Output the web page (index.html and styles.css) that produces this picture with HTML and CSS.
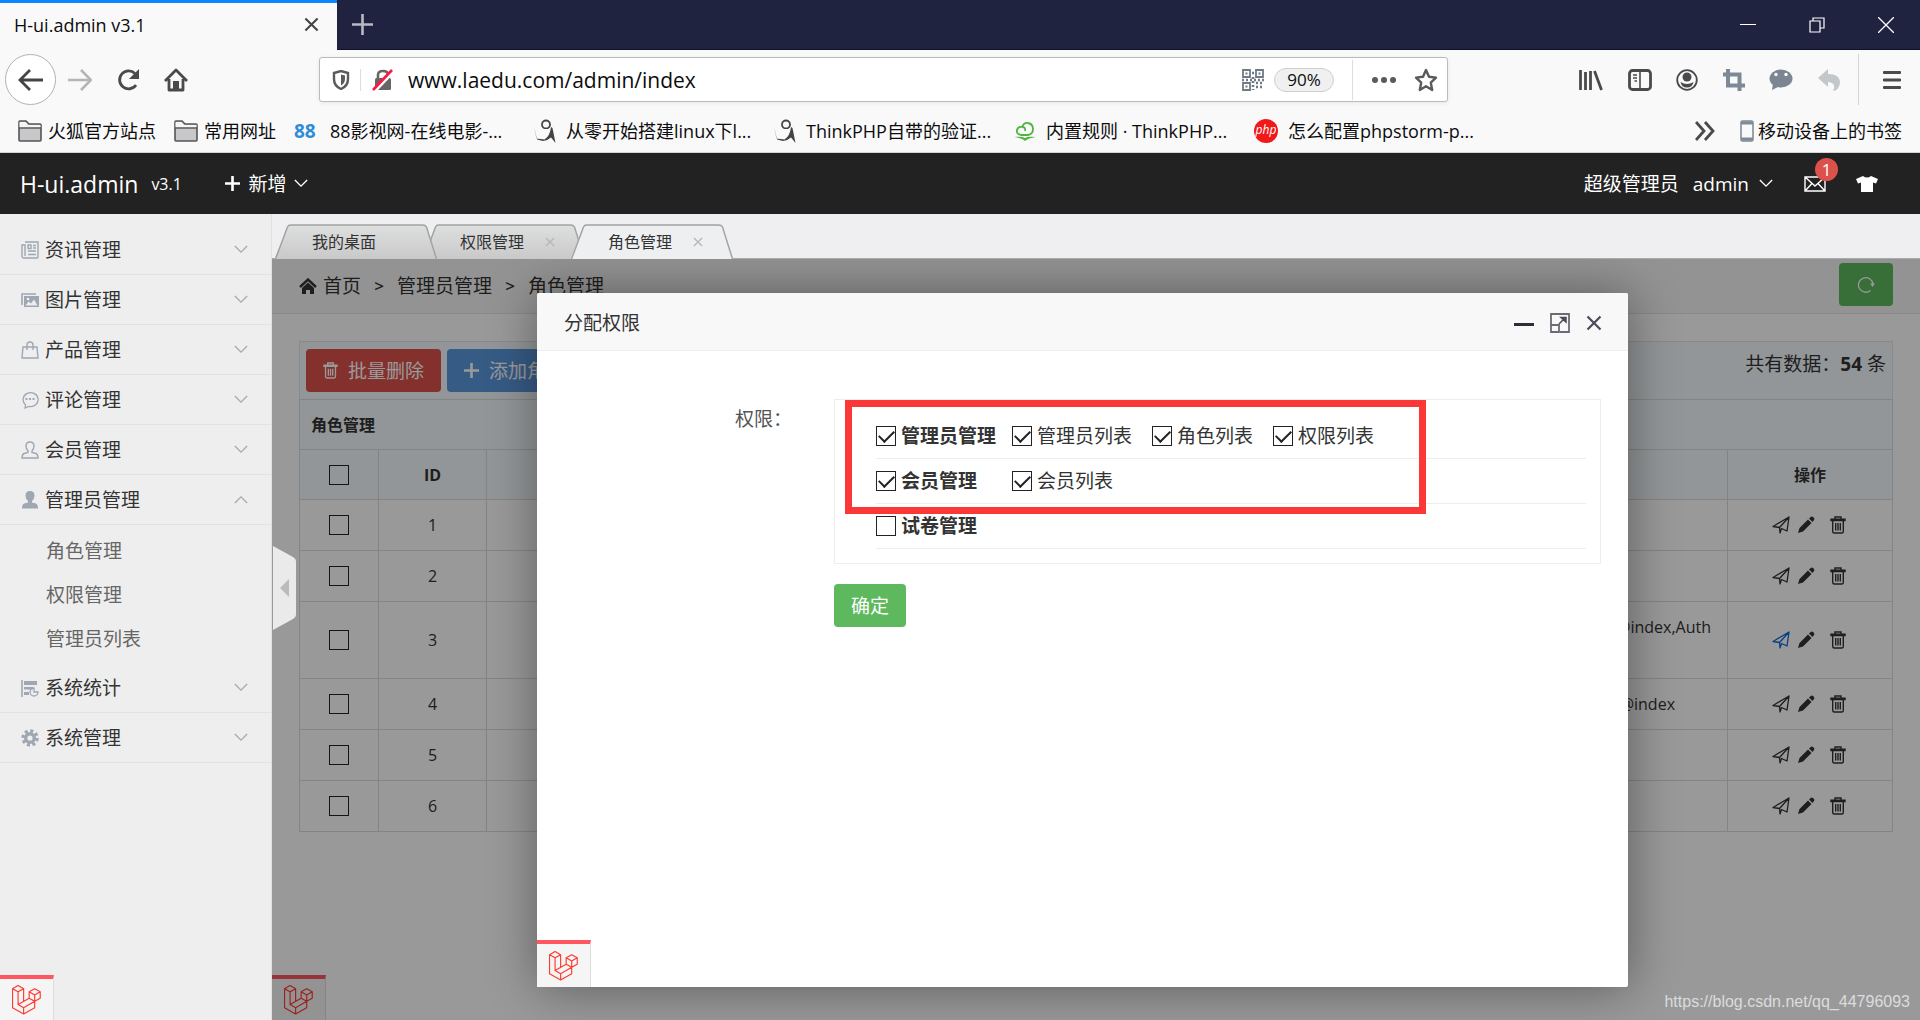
FILE: index.html
```html
<!DOCTYPE html>
<html lang="zh-CN">
<head>
<meta charset="utf-8">
<title>H-ui.admin v3.1</title>
<link rel="stylesheet" href="styles.css">
</head>
<body>
<svg class="sprite" aria-hidden="true">
  <symbol id="i-down" viewBox="0 0 16 10"><path d="M1 1l7 7 7-7" fill="none" stroke="currentColor" stroke-width="1.6"/></symbol>
  <symbol id="i-folder" viewBox="0 0 24 22"><path d="M1 20V2q0-1 1-1h6l3 3h11q1 0 1 1v15q0 1-1 1H2q-1 0-1-1z" fill="#c8c8ca" stroke="#555" stroke-width="1.6"/><path d="M1.5 7.5h21V5H10L7.500 2h-6z" fill="#f5f5f5"/><path d="M1 8h22" stroke="#555" stroke-width="1.4"/></symbol>
  <symbol id="i-figure" viewBox="0 0 22 24"><circle cx="12" cy="5.500" r="4" fill="none" stroke="#444" stroke-width="1.8"/><path d="M0 7l2.500 12.500 8 1Q16 17 17 8l1.500 1 3 15-4.500-5.500Q13 22 9 22l-6-1.500z" fill="#444"/><path d="M3.500 10l1.500 8h4q5-2 6-8z" fill="#f9f9fa"/></symbol>
  <symbol id="i-plane" viewBox="0 0 18 18"><path d="M1 10.500L17 1l-2 14-5.500-2.500L8 17l-.5-5.500L17 1 7.500 11.500z" fill="none" stroke="currentColor" stroke-width="1.3" stroke-linejoin="round"/></symbol>
  <symbol id="i-pen" viewBox="0 0 18 18"><path d="M1 17l1.500-5L11 3.500 14.500 7 6 15.500zM12 2.500L14 .7q1-.6 2 .3l1 1q.8 1 0 2L15.500 6z" fill="currentColor"/></symbol>
  <symbol id="i-trash" viewBox="0 0 16 18"><path d="M1 4.500V3.200h14v1.300zM5 3V1h6v2M2.700 5v10.500q0 1.500 1.500 1.500h7.600q1.500 0 1.500-1.500V5M5.700 7v7.500M8 7v7.500M10.300 7v7.500" fill="none" stroke="currentColor" stroke-width="1.4"/></symbol>
  <symbol id="i-laravel" viewBox="0 0 50 52"><path d="M.8 6.300L10.400.8 20 6.300l-9.600 5.500zM.8 6.300v33l19.200 11 19.200-11v-11M10.400 11.800v22l9.600 5.500 19.200-11M20 6.300v22M10.400 33.800l19.200-11M29.600 11.800l9.600-5.500 9.600 5.500-9.600 5.500zM29.600 11.800v11l9.600 5.500 9.600-5.500v-11M39.200 17.300v11M20 39.300v11" fill="none" stroke="#ff3a2e" stroke-width="2" stroke-linejoin="round"/></symbol>
  <symbol id="i-x" viewBox="0 0 16 16"><path d="M1.500 1.500l13 13m0-13l-13 13" fill="none" stroke="currentColor" stroke-width="2.200"/></symbol>
  <symbol id="i-plus" viewBox="0 0 16 16"><path d="M8 0v16M0 8h16" fill="none" stroke="currentColor" stroke-width="2.800"/></symbol>
  <symbol id="i-tab" viewBox="0 0 162 35"><path d="M0 35L13 3q1-2 3-2h132q3 0 4 2l10 32z" fill="url(#tabfill)"/><path d="M1 35L13 3q1-2 3-2h132q3 0 4 2l10 32" fill="none" stroke="#a3a3a3" stroke-width="1.500"/></symbol>
  <symbol id="i-tab-on" viewBox="0 0 162 35"><path d="M0 35L13 3q1-2 3-2h132q3 0 4 2l10 32z" fill="#eeeff0"/><path d="M1 35L13 3q1-2 3-2h132q3 0 4 2l10 32" fill="none" stroke="#a3a3a3" stroke-width="1.500"/></symbol>
  <defs><linearGradient id="tabfill" x1="0" y1="0" x2="0" y2="1"><stop offset="0" stop-color="#dedfdf"/><stop offset="1" stop-color="#c9c9ca"/></linearGradient></defs>
</svg>

<div class="titlebar">
  <div class="browser-tab"><span>H-ui.admin v3.1</span><button aria-label="关闭标签页"><svg width="15" height="15"><use href="#i-x"/></svg></button></div>
  <button class="new-tab" aria-label="新标签页"><svg width="21" height="21" viewBox="0 0 21 21"><path d="M10.500 0v21M0 10.500h21" stroke="#b9b9c4" stroke-width="2.600"/></svg></button>
  <div class="window-buttons">
    <button aria-label="最小化"><svg width="16" height="16"><path d="M0 7.500h16" stroke="#fff"/></svg></button>
    <button aria-label="还原"><svg width="16" height="16" fill="none" stroke="#fff" stroke-width="1.200"><path d="M1 4h10v11H1zM4 4V1h11v10h-4"/></svg></button>
    <button aria-label="关闭"><svg width="16" height="16"><path d="M0 0l16 16M16 0L0 16" stroke="#fff" stroke-width="1.300"/></svg></button>
  </div>
</div>

<div class="toolbar">
  <div class="nav-buttons">
    <button class="back" aria-label="后退"><svg width="26" height="22" viewBox="0 0 26 22"><path d="M25 11H2M12 1L2 11l10 10" fill="none" stroke="#444" stroke-width="2.800"/></svg></button>
    <button aria-label="前进"><svg width="24" height="22" viewBox="0 0 24 22"><path d="M0 11h22M13 1l10 10-10 10" fill="none" stroke="#b5b5b5" stroke-width="2.600"/></svg></button>
    <button aria-label="刷新"><svg width="24" height="24" viewBox="0 0 24 24"><path d="M19 5.500A9 9 0 1 0 20 17" fill="none" stroke="#4a4a4c" stroke-width="2.800"/><path d="M23 1v10H13z" fill="#4a4a4c"/></svg></button>
    <button aria-label="主页"><svg width="24" height="24" viewBox="0 0 24 24"><path d="M1 13L12 2l11 11M5 11v11h14V11" fill="none" stroke="#4a4a4c" stroke-width="2.800" stroke-linejoin="round"/><path d="M9 22v-9h6v9z" fill="#4a4a4c"/></svg></button>
  </div>
  <div class="urlbar">
    <svg class="shield" width="18" height="20" viewBox="0 0 18 20"><path d="M2 3l7-2 7 2v6q0 7-7 10-7-3-7-10z" fill="none" stroke="#5a5a5c" stroke-width="2.400"/><path d="M9 4.500v11q4-2 4-7v-3z" fill="#5a5a5c"/></svg>
    <svg class="lock" width="22" height="22" viewBox="0 0 22 22"><path d="M6 10V6q0-4 5-4t5 4v4" fill="none" stroke="#666" stroke-width="2.600"/><rect x="3" y="9" width="16" height="12" rx="1.500" fill="#666"/><path d="M3 22L22 2" stroke="#fff" stroke-width="3"/><path d="M1 21L20 1" stroke="#ff1744" stroke-width="2.600"/></svg>
    <input type="text" aria-label="地址" value="www.laedu.com/admin/index">
    <svg width="22" height="22" viewBox="0 0 22 22" fill="none" stroke="#6f7a86" stroke-width="1.800"><path d="M1 1h7v7H1zM14 1h7v7h-7zM1 14h7v7H1z"/><path d="M3.500 4.500h2M16.500 4.500h2M3.500 17.500h2" stroke-width="2"/><path d="M10 4h3M0 11h22M11 8v13M14 14h8M14 18h8" stroke-dasharray="2 2" stroke-width="2.600"/></svg>
    <button class="zoom-level">90%</button>
    <svg class="dots" width="26" height="8"><g fill="#5a5a5c"><circle cx="4" cy="4" r="3"/><circle cx="13" cy="4" r="3"/><circle cx="22" cy="4" r="3"/></g></svg>
    <svg width="24" height="24" viewBox="0 0 24 24"><path d="M12 2l3 6.800 7 .8-5.200 5 1.400 7.400-6.200-3.700L5.800 22l1.400-7.400L2 9.600l7-.8z" fill="none" stroke="#5a5a5c" stroke-width="2.400" stroke-linejoin="round"/></svg>
  </div>
  <div class="tools">
    <svg width="24" height="22" viewBox="0 0 24 22"><path d="M1.500 1v20M6.500 3v18M11.500 2v19M15.500 2l7 19" stroke="#4a4a4c" stroke-width="2.800"/></svg>
    <svg width="24" height="22" viewBox="0 0 24 22"><rect x="1.500" y="1.500" width="21" height="19" rx="3" fill="none" stroke="#4a4a4c" stroke-width="2.800"/><path d="M12 2v18" stroke="#4a4a4c" stroke-width="1.600"/><path d="M5 6h4M5 9h4M6.500 12H9" stroke="#4a4a4c" stroke-width="1.500"/></svg>
    <svg width="22" height="22" viewBox="0 0 22 22"><circle cx="11" cy="11" r="9.800" fill="none" stroke="#4a4a4c" stroke-width="1.800"/><circle cx="11" cy="8" r="4.500" fill="#4a4a4c"/><path d="M4.500 13q6.500 4 13 0-1 5.500-6.500 5.500T4.500 13z" fill="#4a4a4c"/></svg>
    <svg width="22" height="22" viewBox="0 0 22 22"><path d="M5 0v16.500h17M0 5.500h16.500V22" fill="none" stroke="#7e8996" stroke-width="4"/></svg>
    <svg width="24" height="22" viewBox="0 0 24 22"><ellipse cx="12" cy="9.500" rx="11.500" ry="9" fill="#7b8692"/><path d="M4 14l-1 7 8-4z" fill="#7b8692"/><circle cx="7" cy="5.500" r="1.700" fill="#fff"/><circle cx="17" cy="5.500" r="1.700" fill="#fff"/></svg>
    <svg width="22" height="22" viewBox="0 0 22 22"><path d="M0 9L10 0v5q12 0 12 9-1 7-7 8 4-8-5-9v5z" fill="#c3c7cc"/></svg>
  </div>
  <button class="menu" aria-label="菜单"><svg width="18" height="20" viewBox="0 0 18 20"><path d="M1 2.500h16M1 10h16M1 17.500h16" stroke="#4a4a4c" stroke-width="2.800" stroke-linecap="round"/></svg></button>
</div>

<nav class="bookmarks">
  <a href="#"><svg width="24" height="22"><use href="#i-folder"/></svg>火狐官方站点</a>
  <a href="#"><svg width="24" height="22"><use href="#i-folder"/></svg>常用网址</a>
  <a class="site" href="#"><b class="b88">88</b>88影视网-在线电影-...</a>
  <a class="site" href="#"><svg width="22" height="24"><use href="#i-figure"/></svg>从零开始搭建linux下l...</a>
  <a class="site" href="#"><svg width="22" height="24"><use href="#i-figure"/></svg>ThinkPHP自带的验证...</a>
  <a class="site" href="#"><svg width="22" height="20" viewBox="0 0 22 20"><path d="M7 14q-5-1-4-5 1-4 5-3Q10 1 14 2q5 1 5 6t-5 6H7M8 6q4 0 3 4" fill="none" stroke="#4fb53f" stroke-width="1.800"/><path d="M0 16q8-1 11 1 3-2 11-1-8 1-11 4-3-3-11-4z" fill="#4fb53f"/></svg>内置规则 · ThinkPHP...</a>
  <a class="site" href="#"><i class="php">php</i>怎么配置phpstorm-p...</a>
  <button class="more" aria-label="更多书签"><svg width="20" height="20" viewBox="0 0 20 20"><path d="M1 1l8 9-8 9M10 1l8 9-8 9" fill="none" stroke="#4a4a4c" stroke-width="2.800"/></svg></button>
  <a class="mobile" href="#"><svg width="14" height="22" viewBox="0 0 14 22"><rect x="1" y="1" width="12" height="20" rx="2" fill="#f9f9fa" stroke="#9aa3ac" stroke-width="2"/><path d="M1 1.500h12v3H1zM1 17.500h12v3H1z" fill="#7e8a96"/></svg>移动设备上的书签</a>
</nav>

<header class="site-header">
  <a class="brand" href="#">H-ui.admin</a><span class="version">v3.1</span>
  <button class="add-new"><svg width="15" height="15"><use href="#i-plus"/></svg>新增<svg class="caret" width="14" height="9"><use href="#i-down"/></svg></button>
  <div class="user">
    <span>超级管理员</span>
    <button>admin<svg class="caret" width="14" height="9"><use href="#i-down"/></svg></button>
    <a class="mail" href="#" aria-label="消息"><svg width="22" height="16" viewBox="0 0 22 16"><path d="M1 1h20v14H1zM1 1l10 9L21 1M1 15l7-7.500M21 15l-7-7.500" fill="none" stroke="#fff" stroke-width="1.400"/></svg><span class="badge">1</span></a>
    <a class="skin" href="#" aria-label="换肤"><svg width="22" height="16" viewBox="0 0 22 16"><path d="M7 0q4 3 8 0l7 3-2 4.500-3-1V16H5V6.500l-3 1L0 3z" fill="#fff"/></svg></a>
  </div>
</header>

<div class="layout">
  <aside class="sidebar">
    <nav class="side-menu">
      <a class="entry" href="#"><svg width="18" height="18" viewBox="0 0 18 18"><path d="M4 1h13v15q0 1-1 1H3q-2 0-2-2V4h3v11M7 4h3v3.500H7zM12 4.500h3M12 7h3M7 10h8M7 13.500h8" fill="none" stroke="#9fa7b3" stroke-width="1.400"/></svg>资讯管理<svg class="caret" width="14" height="9"><use href="#i-down"/></svg></a>
      <a class="entry" href="#"><svg width="18" height="18" viewBox="0 0 18 18"><path d="M1 14V3h14" fill="none" stroke="#9fa7b3" stroke-width="1.600"/><rect x="3" y="5" width="15" height="11" fill="#9fa7b3"/><path d="M4.500 14.500l3-4 2.500 2 3-4 3.500 6z" fill="#eee"/><circle cx="7" cy="8" r="1.300" fill="#eee"/></svg>图片管理<svg class="caret" width="14" height="9"><use href="#i-down"/></svg></a>
      <a class="entry" href="#"><svg width="18" height="18" viewBox="0 0 18 18"><path d="M2 6h14l1 11H1zM6 9V4q0-3 3-3t3 3v5" fill="none" stroke="#9fa7b3" stroke-width="1.400"/></svg>产品管理<svg class="caret" width="14" height="9"><use href="#i-down"/></svg></a>
      <a class="entry" href="#"><svg width="18" height="18" viewBox="0 0 18 18"><path d="M4 17l.5-3.200A7.500 7 0 1 1 8 15.500z" fill="none" stroke="#9fa7b3" stroke-width="1.300"/><path d="M4.500 8h2M8 8h2M11.500 8h2" stroke="#9fa7b3" stroke-width="2"/></svg>评论管理<svg class="caret" width="14" height="9"><use href="#i-down"/></svg></a>
      <a class="entry" href="#"><svg width="18" height="18" viewBox="0 0 18 18"><path d="M7 10q-2-2-2-5 0-4 4-4t4 4q0 3-2 5v1.500l4 1q2 1 2 4.500H1q0-3.500 2-4.500l4-1z" fill="none" stroke="#9fa7b3" stroke-width="1.400"/></svg>会员管理<svg class="caret" width="14" height="9"><use href="#i-down"/></svg></a>
      <a class="entry open" href="#"><svg width="18" height="18" viewBox="0 0 18 18"><path d="M7 10Q4.500 8 4.500 4.500 4.500 0 9 0t4.500 4.500Q13.500 8 11 10v1.500l4 1q2 1 2 5H1q0-4 2-5l4-1z" fill="#9fa7b3"/></svg>管理员管理<svg class="caret" width="14" height="9"><use href="#i-down"/></svg></a>
      <div class="submenu"><a href="#">角色管理</a><a href="#">权限管理</a><a href="#">管理员列表</a></div>
      <a class="entry" href="#"><svg width="18" height="18" viewBox="0 0 18 18"><path d="M1 1v17" stroke="#9fa7b3" stroke-width="1.600"/><path d="M3 2h13v4H3zM3 8h9v2.500H3zM3 13h5v3H3z" fill="#9fa7b3"/><path d="M13 9a4 4 0 1 0 4 4h-4z" fill="none" stroke="#9fa7b3" stroke-width="1.300"/></svg>系统统计<svg class="caret" width="14" height="9"><use href="#i-down"/></svg></a>
      <a class="entry" href="#"><svg width="18" height="18" viewBox="0 0 18 18"><circle cx="9" cy="9" r="7" fill="none" stroke="#9fa7b3" stroke-width="3.400" stroke-dasharray="3 2.500"/><circle cx="9" cy="9" r="4.300" fill="none" stroke="#9fa7b3" stroke-width="3.400"/></svg>系统管理<svg class="caret" width="14" height="9"><use href="#i-down"/></svg></a>
    </nav>
    <button class="debug" aria-label="Laravel"><svg width="29" height="30"><use href="#i-laravel"/></svg></button>
  </aside>

  <main class="workspace">
    <div class="page-tabs">
      <a class="page-tab first" href="#"><svg class="shape"><use href="#i-tab"/></svg><span>我的桌面</span></a>
      <a class="page-tab" href="#"><svg class="shape"><use href="#i-tab"/></svg><span>权限管理</span><svg class="close" width="10" height="10"><use href="#i-x"/></svg></a>
      <a class="page-tab on" href="#"><svg class="shape"><use href="#i-tab-on"/></svg><span>角色管理</span><svg class="close" width="10" height="10"><use href="#i-x"/></svg></a>
    </div>

    <section class="stage">
      <div class="crumbs">
        <svg width="18" height="16" viewBox="0 0 18 16"><path d="M1 9l8-7.500L17 9" fill="none" stroke="#333" stroke-width="2.400"/><path d="M3 10l6-5.500L15 10v6h-4v-4H7v4H3z" fill="#333"/></svg>
        <a href="#">首页</a><span class="sep">&gt;</span><span>管理员管理</span><span class="sep">&gt;</span><span>角色管理</span>
        <button class="btn green reload" aria-label="刷新"><svg width="18" height="18" viewBox="0 0 18 18"><path d="M13.500 14.500A7.300 7.300 0 1 1 16 8" fill="none" stroke="#fff" stroke-width="1.300"/><path d="M13 7.500h5L15.500 11z" fill="#fff"/></svg></button>
      </div>
      <div class="page-body">
        <div class="actions">
          <button class="btn red"><svg width="15" height="17"><use href="#i-trash"/></svg>批量删除</button>
          <button class="btn blue"><svg width="15" height="15"><use href="#i-plus"/></svg>添加角色</button>
          <span class="total">共有数据：<strong>54</strong> 条</span>
        </div>
        <table class="roles">
          <colgroup><col class="c-check"><col class="c-id"><col class="c-name"><col><col class="c-ops"></colgroup>
          <thead>
            <tr><th class="caption" colspan="5">角色管理</th></tr>
            <tr><th><input type="checkbox" aria-label="全选"></th><th>ID</th><th></th><th></th><th>操作</th></tr>
          </thead>
          <tbody>
            <tr><td><input type="checkbox" aria-label="1"></td><td>1</td><td></td><td></td><td><span class="ops"><svg><use href="#i-plane"/></svg><svg><use href="#i-pen"/></svg><svg class="del"><use href="#i-trash"/></svg></span></td></tr>
            <tr><td><input type="checkbox" aria-label="2"></td><td>2</td><td></td><td></td><td><span class="ops"><svg><use href="#i-plane"/></svg><svg><use href="#i-pen"/></svg><svg class="del"><use href="#i-trash"/></svg></span></td></tr>
            <tr class="tall"><td><input type="checkbox" aria-label="3"></td><td>3</td><td></td><td class="auth">@index,Auth<br>&nbsp;</td><td><span class="ops"><svg class="hover"><use href="#i-plane"/></svg><svg><use href="#i-pen"/></svg><svg class="del"><use href="#i-trash"/></svg></span></td></tr>
            <tr><td><input type="checkbox" aria-label="4"></td><td>4</td><td></td><td class="auth short">@index</td><td><span class="ops"><svg><use href="#i-plane"/></svg><svg><use href="#i-pen"/></svg><svg class="del"><use href="#i-trash"/></svg></span></td></tr>
            <tr><td><input type="checkbox" aria-label="5"></td><td>5</td><td></td><td></td><td><span class="ops"><svg><use href="#i-plane"/></svg><svg><use href="#i-pen"/></svg><svg class="del"><use href="#i-trash"/></svg></span></td></tr>
            <tr><td><input type="checkbox" aria-label="6"></td><td>6</td><td></td><td></td><td><span class="ops"><svg><use href="#i-plane"/></svg><svg><use href="#i-pen"/></svg><svg class="del"><use href="#i-trash"/></svg></span></td></tr>
          </tbody>
        </table>
      </div>
      <button class="debug" aria-label="Laravel"><svg width="29" height="30"><use href="#i-laravel"/></svg></button>
      <div class="shade"></div>

      <button class="side-toggle" aria-label="收起菜单"><svg width="23" height="84" viewBox="0 0 23 84"><path d="M0 0l20 11q3 2 3 4v54q0 2-3 4L0 84z" fill="#eaeaea"/><path d="M16 33v18L7 42z" fill="#bbb"/></svg></button>

      <div class="dialog" role="dialog" aria-label="分配权限">
        <div class="dialog-head">
          <h2>分配权限</h2>
          <button aria-label="最小化"><svg width="20" height="20"><path d="M0 11.500h20" stroke="#2e2d3c" stroke-width="3"/></svg></button>
          <button aria-label="最大化"><svg width="20" height="20" viewBox="0 0 20 20"><path d="M1 11V1h18v18H10M1 12h8v7H1z" fill="none" stroke="#6c6a75" stroke-width="1.800"/><path d="M9 11l6-6M11 4.500h5V9z" fill="#4c4a58" stroke="#4c4a58" stroke-width="1.500"/></svg></button>
          <button aria-label="关闭"><svg width="16" height="16"><use href="#i-x"/></svg></button>
        </div>
        <form class="dialog-form">
          <span class="field-name">权限：</span>
          <div class="field">
            <div class="perm-box">
              <div class="perm-row"><label class="group"><input type="checkbox" checked>管理员管理</label><label><input type="checkbox" checked>管理员列表</label><label><input type="checkbox" checked>角色列表</label><label><input type="checkbox" checked>权限列表</label></div>
              <div class="perm-row"><label class="group"><input type="checkbox" checked>会员管理</label><label><input type="checkbox" checked>会员列表</label></div>
              <div class="perm-row"><label class="group"><input type="checkbox">试卷管理</label></div>
              <div class="highlight"></div>
            </div>
            <button type="button" class="btn green">确定</button>
          </div>
        </form>
        <button class="debug" aria-label="Laravel"><svg width="29" height="30"><use href="#i-laravel"/></svg></button>
      </div>
      <span class="watermark">https://blog.csdn.net/qq_44796093</span>
    </section>
  </main>
</div>
</body>
</html>
```

FILE: styles.css
```css
* { box-sizing: border-box; }
body {
  margin: 0;
  min-height: 100vh;
  display: flex;
  flex-direction: column;
  font-family: "Open Sans", "Noto Sans CJK SC", sans-serif;
  font-size: 19px;
  line-height: 28px;
  color: #333;
  background: #eee;
}
a { color: inherit; text-decoration: none; }
button { margin: 0; padding: 0; border: 0; background: none; color: inherit; font: inherit; display: flex; align-items: center; justify-content: center; }
svg { display: block; flex: none; }
.sprite { position: absolute; width: 0; height: 0; }

/* browser window */
.titlebar { display: flex; height: 50px; background: #202340; border-bottom: 1px solid #10112a; color: #fff; }
.browser-tab { width: 337px; height: 50px; padding: 0 18px 4px 14px; display: flex; align-items: center; justify-content: space-between; background: #f9f9fa; border-top: 3px solid #0a84ff; color: #0c0c0d; font-size: 18px; }
.browser-tab button { color: #444; }
.new-tab { width: 50px; }
.window-buttons { margin-left: auto; display: flex; }
.window-buttons button { width: 69px; }

.toolbar { display: flex; align-items: center; height: 59px; padding: 0 19px 0 5px; background: #f9f9fa; }
.nav-buttons { display: flex; align-items: center; width: 314px; }
.nav-buttons button { width: 48px; height: 48px; }
.nav-buttons .back { width: 51px; height: 51px; border: 1px solid #b1b1b3; border-radius: 50%; background: #fff; }
.urlbar { flex: 1; height: 45px; display: flex; align-items: center; padding: 0 9px 0 12px; background: #fff; border: 1px solid #bbb; border-radius: 3px; box-shadow: 0 1px 4px rgba(0,0,0,.08); }
.urlbar input { flex: 1; min-width: 0; padding: 0; border: 0; outline: 0; background: none; font: inherit; font-size: 21px; color: #0c0c0d; }
.shield { margin-right: 10px; }
.lock { box-sizing: content-box; padding-left: 11px; margin-right: 14px; border-left: 1px solid #ddd; }
.zoom-level { width: 60px; height: 24px; margin: 0 18px 0 10px; border: 1px solid #d0d0d0; border-radius: 12px; background: #f0f0f1; color: #0c0c0d; font-size: 17px; }
.dots { box-sizing: content-box; padding: 16px 0 16px 18px; margin-right: 17px; border-left: 1px solid #ddd; }
.tools { display: flex; width: 410px; padding: 0 18px 0 131px; justify-content: space-between; align-items: center; }
.menu { height: 51px; padding-left: 24px; border-left: 1px solid #d5d5d7; }

.bookmarks { display: flex; align-items: center; height: 44px; padding: 0 18px; background: #f9f9fa; border-bottom: 1px solid #d4d4d5; color: #0c0c0d; font-size: 18px; white-space: nowrap; }
.bookmarks a { display: flex; align-items: center; gap: 6px; margin-right: 18px; }
.bookmarks .site { width: 240px; gap: 10px; margin-right: 0; }
.b88 { width: 26px; color: #2d8cd8; font-size: 19px; }
.php { width: 24px; height: 24px; border-radius: 50%; background: #f01818; color: #fff; font-size: 12px; line-height: 22px; text-align: center; }
.bookmarks .more { margin-left: auto; margin-right: 25px; }
.bookmarks .mobile { gap: 4px; margin-right: 0; }

/* site header */
.site-header { display: flex; align-items: center; height: 61px; padding: 0 42px 0 20px; background: #222; color: #fff; white-space: nowrap; }
.brand { font-size: 23px; margin-right: 13px; }
.version { width: 74px; font-size: 16px; }
.add-new { gap: 8px; }
.user { margin-left: auto; display: flex; align-items: center; }
.user > span { margin-right: 14px; }
.user button { gap: 10px; }
.mail { position: relative; margin: 0 30px 0 31px; }
.badge { position: absolute; left: 11px; top: -18px; width: 23px; height: 23px; border-radius: 50%; background: #dd514c; font-size: 17px; line-height: 23px; text-align: center; }

/* layout */
.layout { flex: 1; display: grid; grid-template-columns: 272px 1fr; }
.sidebar { display: flex; flex-direction: column; justify-content: space-between; border-right: 1px solid #e0e0e0; background: #eee; }
.side-menu { padding-top: 11px; }
.entry { display: flex; align-items: center; gap: 6px; height: 50px; padding: 0 23px 0 21px; border-bottom: 1px solid #e2e2e2; }
.entry .caret { margin-left: auto; color: #aaa; }
.entry.open .caret { transform: rotate(180deg); }
.submenu { padding: 4px 0 2px 46px; color: #666; }
.submenu a { display: block; line-height: 44px; }
.debug { width: 54px; height: 45px; border-top: 4px solid #ff5661; border-right: 1px solid #ddd; background: #f5f5f5; }

.workspace { display: flex; flex-direction: column; min-width: 0; }
.page-tabs { display: flex; height: 45px; padding: 10px 0 0 2px; background: #efeff1; border-bottom: 1px solid #aaa; font-size: 16px; }
.page-tab { position: relative; width: 163px; height: 35px; margin-right: -15px; padding-left: 38px; display: flex; align-items: center; gap: 21px; }
.page-tab.first { z-index: 1; }
.page-tab.on { z-index: 2; }
.page-tab span, .page-tab .close { position: relative; }
.page-tab .shape { position: absolute; left: 0; top: 0; width: 163px; height: 35px; }
.page-tab .close { color: #b2b8be; }

.stage { position: relative; flex: 1; display: flex; flex-direction: column; background: #fff; overflow: hidden; }
.crumbs { display: flex; align-items: center; height: 55px; padding: 0 27px; background: #f5f5f5; border-bottom: 1px solid #e5e5e5; }
.crumbs svg { margin-right: 6px; }
.crumbs .sep { width: 36px; text-align: center; font-size: 17px; font-weight: 600; }
.reload { margin: 0 0 3px auto; width: 54px; }
.crumbs .reload svg { margin: 0; }
.btn { height: 43px; padding: 0 17px; gap: 10px; border-radius: 4px; color: #fff; }
.green { background: #5eb95e; }
.red { background: #dd514c; }
.blue { background: #5a98de; }
.page-body { flex: 1; padding: 27px; }
.actions { display: flex; align-items: center; gap: 6px; height: 58px; padding: 0 6px; background: #f5fafe; border: 1px solid #e5e5e5; border-bottom: 0; }
.total { margin-left: auto; align-self: flex-start; padding-top: 8px; }
.roles { width: 100%; table-layout: fixed; border-collapse: collapse; font-size: 16px; line-height: 26px; text-align: center; }
.roles th, .roles td { height: 51px; padding: 0; border: 1px solid #ddd; }
.roles th { height: 50px; background: #f5fafe; }
.roles .caption { padding-left: 11px; text-align: left; }
.roles .tall td { height: 77px; }
.c-check { width: 79px; }
.c-id { width: 108px; }
.c-name { width: 220px; }
.c-ops { width: 165px; }
.roles .auth { padding-right: 16px; text-align: right; }
.roles .short { padding-right: 52px; }
.ops { display: flex; justify-content: center; padding-right: 2px; gap: 7px; }
.ops svg { width: 18px; height: 18px; }
.ops .del { margin-left: 8px; width: 16px; }
.ops .hover { color: #0c6ad6; }
input[type="checkbox"] { appearance: none; flex: none; display: grid; place-items: center; width: 20px; height: 20px; margin: 0; border: 1px solid #222; background: none; }
.roles input[type="checkbox"] { margin: 0 auto; }
input[type="checkbox"]:checked::after { content: ""; width: 13px; height: 7px; margin-top: -4px; border: solid #222; border-width: 0 0 2px 2px; transform: rotate(-45deg); }

.shade { position: absolute; inset: 0; background: rgba(0,0,0,.4); }
.side-toggle { position: absolute; left: 1px; top: 287px; }

/* dialog */
.dialog { position: absolute; left: 265px; right: 292px; top: 34px; bottom: 33px; display: flex; flex-direction: column; background: #fff; border-radius: 2px; box-shadow: 1px 1px 50px rgba(0,0,0,.4); }
.dialog-head { display: flex; align-items: center; gap: 16px; height: 58px; padding: 2px 26px 0 27px; background: #f8f8f8; border-bottom: 1px solid #eee; border-radius: 2px 2px 0 0; color: #4c4a58; }
.dialog-head h2 { flex: 1; margin: 0; font-size: 19px; font-weight: 400; color: #333; }
.dialog-form { flex: 1; display: grid; grid-template-columns: 255px 1fr; column-gap: 42px; padding: 48px 27px 0 0; align-items: start; }
.field-name { padding-top: 6px; text-align: right; color: #555; }
.field { display: grid; gap: 20px; justify-items: start; }
.perm-box { position: relative; width: 100%; padding: 14px 14px 14px 41px; border: 1px solid #eee; }
.perm-row { display: flex; align-items: center; gap: 20px; height: 45px; border-bottom: 1px solid #eee; white-space: nowrap; }
.perm-row label { display: flex; align-items: center; gap: 5px; }
.perm-row .group { width: 116px; font-weight: 700; }
.dialog .debug { height: 47px; }
.highlight { position: absolute; left: 10px; top: 0; width: 581px; height: 114px; border: 7px solid #fb3838; }
.watermark { position: absolute; right: 10px; bottom: 5px; font-family: "Liberation Sans", Arial, sans-serif; font-size: 16px; line-height: 26px; color: #dcdcdc; }
```
